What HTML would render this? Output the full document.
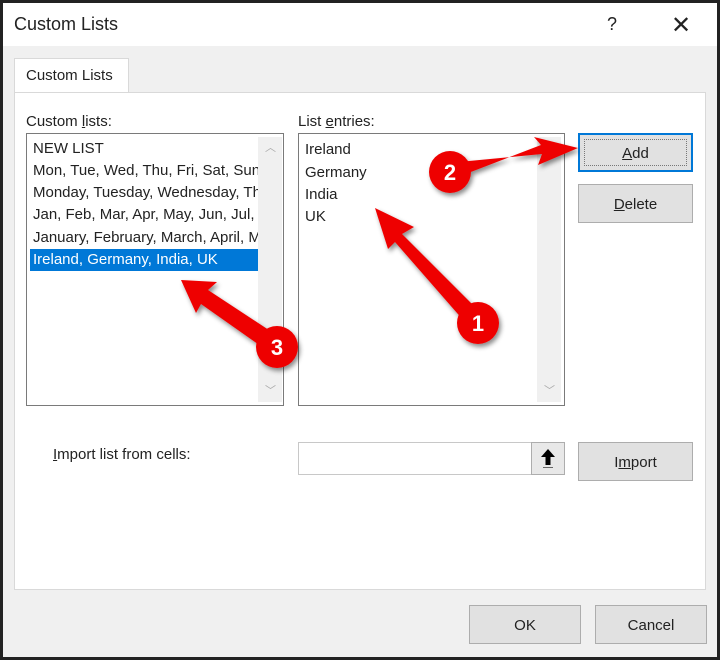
<!DOCTYPE html>
<html><head><style>
*{margin:0;padding:0;box-sizing:border-box}
body{width:720px;height:660px;background:#222;position:relative;overflow:hidden;font-family:"Liberation Sans",sans-serif;color:#222;font-size:15px}
.win{position:absolute;left:3px;top:3px;width:714px;height:654px;background:#f0f0f0}
.title{position:absolute;left:0;top:0;width:714px;height:43px;background:#fff}
.abs{position:absolute}
.btn{position:absolute;background:#e1e1e1;border:1px solid #adadad;text-align:center;font-size:15px}
.lb{position:absolute;background:#fff;border:1px solid #7a7a7a}
.sb{position:absolute;background:#f0f0f0;top:3px;bottom:3px;width:24px}
.row{position:absolute;left:3px;height:22px;line-height:22px;padding-left:3px;white-space:nowrap;overflow:hidden}
u{text-decoration:underline}
</style></head><body>
<div class="win">
<div class="title">
<div class="abs" style="left:11px;top:11px;font-size:18px">Custom Lists</div>
<div class="abs" style="left:604px;top:11px;font-size:18px">?</div>
<div class="abs" style="left:668px;top:8px;font-size:24px;font-weight:300">✕</div>
</div>
<div class="abs" style="left:11px;top:55px;width:115px;height:36px;background:#fff;border:1px solid #d9d9d9;border-bottom:none"></div>
<div class="abs" style="left:23px;top:64px;font-size:15px">Custom Lists</div>
<div class="abs" style="left:11px;top:89px;width:692px;height:498px;background:#fff;border:1px solid #d9d9d9"></div>
</div>
<div class="abs" style="left:26px;top:113px;font-size:15px">Custom <u>l</u>ists:</div>
<div class="abs" style="left:298px;top:113px;font-size:15px">List <u>e</u>ntries:</div>
<div class="lb" style="left:26px;top:133px;width:258px;height:273px">
<div class="row" style="top:4px;width:228px">NEW LIST</div>
<div class="row" style="top:26px;width:228px">Mon, Tue, Wed, Thu, Fri, Sat, Sun</div>
<div class="row" style="top:48px;width:228px">Monday, Tuesday, Wednesday, Thursday</div>
<div class="row" style="top:70px;width:228px">Jan, Feb, Mar, Apr, May, Jun, Jul, Aug</div>
<div class="row" style="top:93px;width:228px">January, February, March, April, May</div>
<div class="row" style="top:115px;width:228px;background:#0078d7;color:#fff">Ireland, Germany, India, UK</div>
<div class="sb" style="left:231px"><div class="abs" style="left:7px;top:2px;color:#aaa;font-size:11px">︿</div><div class="abs" style="left:7px;bottom:4px;color:#aaa;font-size:11px">﹀</div></div>
</div>
<div class="lb" style="left:298px;top:133px;width:267px;height:273px">
<div class="row" style="top:5px">Ireland</div>
<div class="row" style="top:28px">Germany</div>
<div class="row" style="top:50px">India</div>
<div class="row" style="top:72px">UK</div>
<div class="sb" style="left:238px"><div class="abs" style="left:7px;bottom:4px;color:#aaa;font-size:11px">﹀</div></div>
</div>
<div class="btn" style="left:578px;top:133px;width:115px;height:39px;border:2px solid #0078d7;line-height:37px"><div class="abs" style="left:4px;top:4px;right:4px;bottom:4px;border:1px dotted #777"></div><u>A</u>dd</div>
<div class="btn" style="left:578px;top:184px;width:115px;height:39px;line-height:39px"><u>D</u>elete</div>
<div class="abs" style="left:53px;top:446px;font-size:15px"><u>I</u>mport list from cells:</div>
<div class="abs" style="left:298px;top:442px;width:267px;height:33px;background:#fff;border:1px solid #c8c8c8"></div>
<div class="abs" style="left:531px;top:442px;width:34px;height:33px;background:#e8e8e8;border:1px solid #adadad"></div>
<svg class="abs" style="left:538px;top:446px" width="20" height="24"><path d="M10 3 L3 11 L7.5 11 L7.5 19 L12.5 19 L12.5 11 L17 11 Z" fill="#000"/><rect x="5" y="21" width="10" height="1" fill="#666"/></svg>
<div class="btn" style="left:578px;top:442px;width:115px;height:39px;line-height:39px">I<u>m</u>port</div>
<div class="btn" style="left:469px;top:605px;width:112px;height:39px;line-height:39px">OK</div>
<div class="btn" style="left:595px;top:605px;width:112px;height:39px;line-height:39px">Cancel</div>
<svg class="abs" style="left:0;top:0" width="720" height="660">
<defs><filter id="s"><feDropShadow dx="2" dy="3" stdDeviation="2.5" flood-opacity="0.45"/></filter></defs>
<g fill="#ee0000" filter="url(#s)">
<path d="M483 315 L402 234 L414 227 L375 208 L388 249 L395 242 L471 329 Z"/>
<circle cx="478" cy="323" r="21"/>
<path d="M448 163 L542 154 L538 165 L578 148 L534 137 L541 145 L450 180 Z"/>
<circle cx="450" cy="172" r="21"/>
<path d="M284 340 L208 290 L217 282 L181 280 L196 313 L201 304 L272 354 Z"/>
<circle cx="277" cy="347" r="21"/>
</g>
<g fill="#fff" font-family="Liberation Sans" font-weight="bold" font-size="22" text-anchor="middle">
<text x="478" y="331">1</text><text x="450" y="180">2</text><text x="277" y="355">3</text>
</g>
</svg>
</body></html>
